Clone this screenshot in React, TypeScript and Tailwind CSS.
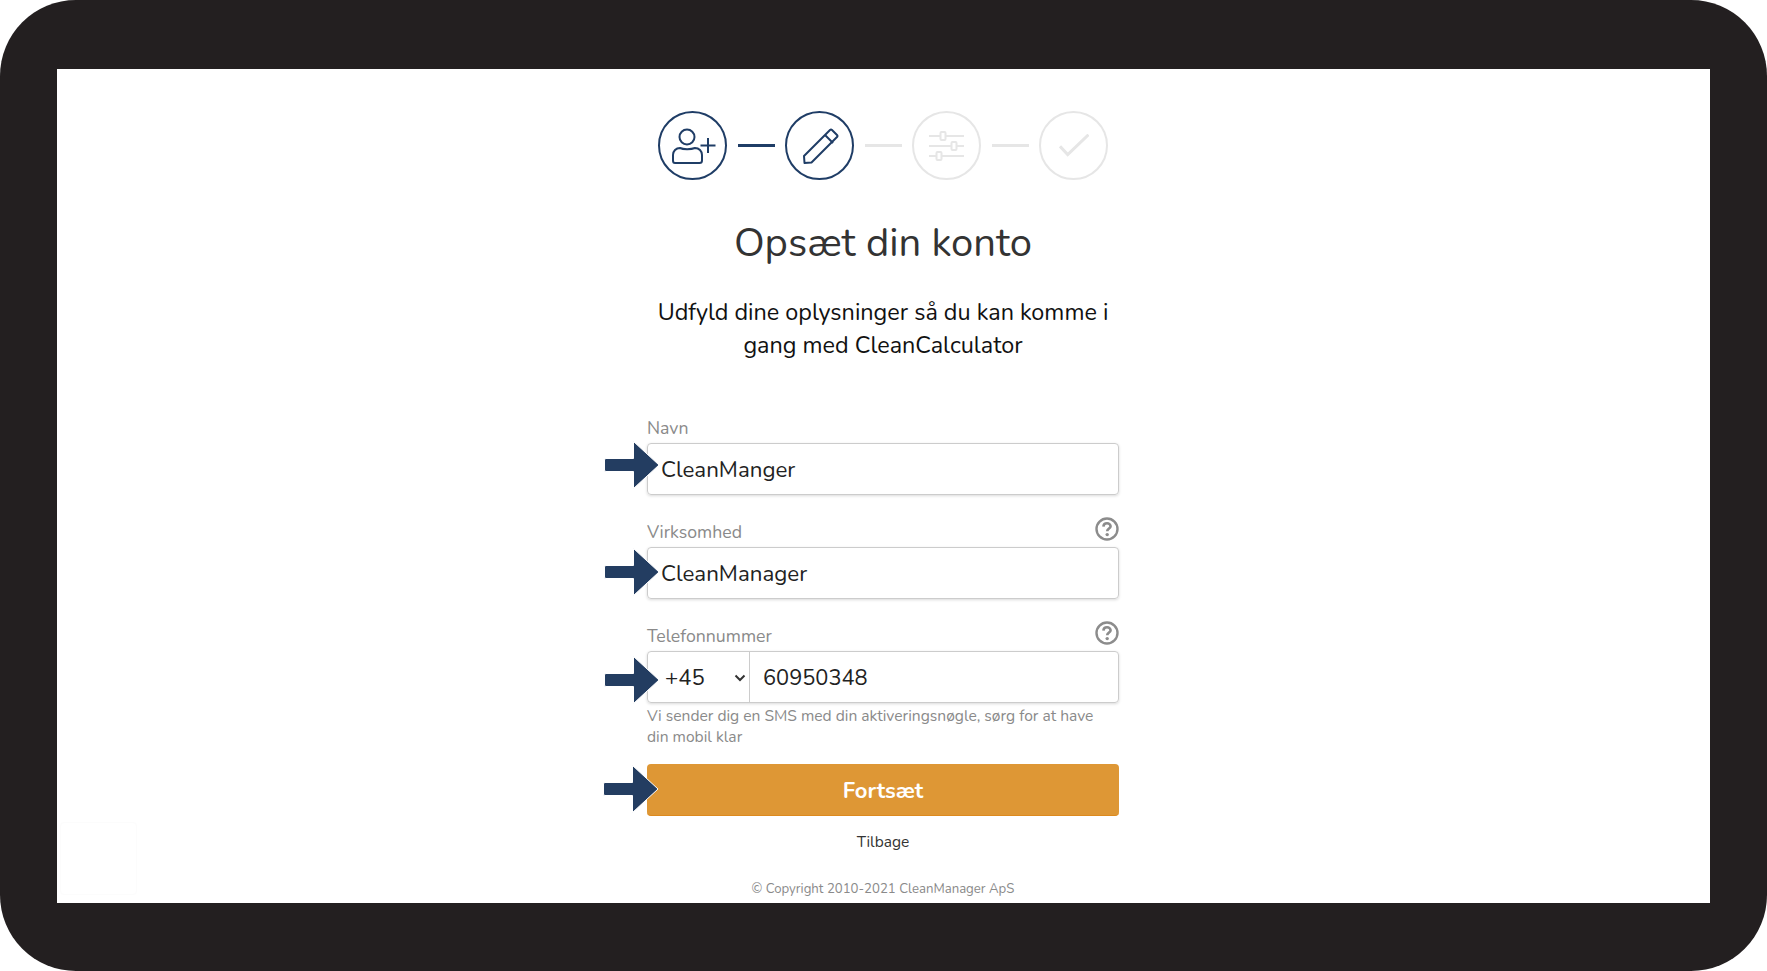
const navy = "#1f3d66";
const grey = "#e6e6e6";

function Arrow({ className }: { className: string }) {
  return (
    <svg className={`absolute left-[-45px] ${className}`} width="58" height="52" viewBox="0 0 58 52">
      <path
        d="M3 19.500 H30.500 V2.500 L56 26 L30.500 49.500 V32.500 H3 Q1.500 32.500 1.500 31 V21 Q1.500 19.500 3 19.500 Z"
        fill="#233d61"
        stroke="#ffffff"
        strokeWidth="1"
        strokeLinejoin="round"
      />
    </svg>
  );
}

function Circle({ color, children }: { color: string; children: React.ReactNode }) {
  return (
    <div
      className="w-[69px] h-[69px] rounded-full border-2 flex items-center justify-center shrink-0"
      style={{ borderColor: color }}
    >
      {children}
    </div>
  );
}

function Line({ color }: { color: string }) {
  return <div className="w-[37px] h-[3px] ml-[11px] mr-[10px] shrink-0" style={{ backgroundColor: color }} />;
}

function Help() {
  return (
    <svg className="absolute right-0 top-[-4px]" width="24" height="24" viewBox="0 0 24 24" fill="none">
      <circle cx="12" cy="12" r="10.500" stroke="#8c8c8c" strokeWidth="2.400" />
      <path d="M8.400 9.600 C8.600 7.400 10.200 6.300 12 6.300 C14 6.300 15.600 7.600 15.600 9.300 C15.600 11.400 12.200 11.600 12.200 14.200" stroke="#8c8c8c" strokeWidth="2.600" />
      <circle cx="12.200" cy="17.600" r="1.700" fill="#8c8c8c" />
    </svg>
  );
}

const labelCls = "h-[26px] text-[17.700px] leading-[22px] text-[#8a8a8a]";
const boxCls = "relative h-[52px] rounded-[4px] border border-[#cccccc] shadow-[0_1px_3px_rgba(0,0,0,0.15)] flex items-center text-[22.300px] text-[#222222]";

export default function App() {
  return (
    <div className="w-[1767px] h-[971px] bg-white overflow-hidden font-['Nunito','Lato','Noto_Sans',sans-serif]">
      <div className="relative w-full h-full bg-[#231f20] rounded-[76px] pt-[69px] pb-[68px] px-[57px]">
        <div className="absolute left-[60px] top-[822px] w-[77px] h-[73px] border border-[#fcfcfc] rounded-sm" />
        <div className="w-full h-full bg-white flex flex-col items-center pt-[42px]">
          <div className="flex items-center mr-[1px]">
            <Circle color={navy}>
              <svg width="44" height="36" viewBox="0 0 44 36" fill="none" stroke={navy} strokeWidth="2" className="ml-[3px]">
                <circle cx="15" cy="9" r="7.500" />
                <path d="M3 35 H27.500 Q30 35 30 32.500 V27 C30 23 27 20 23 20 C19 21.500 11 21.500 8 20 C4 20 1 23 1 27 V32.500 Q1 35 3 35 Z" />
                <path d="M36 10 V25 M28.500 17.500 H43.500" />
              </svg>
            </Circle>
            <Line color={navy} />
            <Circle color={navy}>
              <svg width="36" height="36" viewBox="0 0 36 36" fill="none" stroke={navy} strokeWidth="2" strokeLinejoin="round" className="ml-[3px]">
                <path d="M1 28 L27 2 Q28 1 29 2 L34 7 Q35 8 34 9 L8.500 34.500 L1.500 35 Z" />
                <path d="M22 7 L30 15" />
              </svg>
            </Circle>
            <Line color={grey} />
            <Circle color={grey}>
              <svg width="36" height="30" viewBox="0 0 36 30" fill="none" stroke={grey} strokeWidth="2" className="ml-[1px]">
                <path d="M0 5 H35 M0 15 H35 M0 25 H35" />
                <rect x="11.500" y="1" width="5" height="8" rx="1" fill="#fff" />
                <rect x="22.500" y="11" width="5" height="8" rx="1" fill="#fff" />
                <rect x="7.500" y="21" width="5" height="8" rx="1" fill="#fff" />
              </svg>
            </Circle>
            <Line color={grey} />
            <Circle color={grey}>
              <svg width="30" height="23" viewBox="0 0 30 23" fill="none" stroke={grey} strokeWidth="3" className="ml-[1px]">
                <path d="M1 12.300 L8.700 20.500 L29.500 0.700" />
              </svg>
            </Circle>
          </div>

          <h1 className="mt-[35px] text-[40px] leading-[56px] text-[#333333] mr-[1px]">Opsæt din konto</h1>

          <p className="mt-[25px] w-[472px] text-center text-[23.400px] leading-[33px] text-[#111111] mr-[1px]">
            Udfyld dine oplysninger så du kan komme i gang med CleanCalculator
          </p>

          <div className="mt-[55px] w-[472px] flex flex-col mr-[1px]">
            <div className="relative">
              <div className={labelCls}>Navn</div>
              <div className={`${boxCls} pl-[13px] pt-[2px]`}>
                CleanManger
                <Arrow className="top-[-5px]" />
              </div>
            </div>

            <div className="relative mt-[26px]">
              <Help />
              <div className={labelCls}>Virksomhed</div>
              <div className={`${boxCls} pl-[13px] pt-[2px]`}>
                CleanManager
                <Arrow className="top-[-2px]" />
              </div>
            </div>

            <div className="relative mt-[26px]">
              <Help />
              <div className={labelCls}>Telefonnummer</div>
              <div className={boxCls}>
                <div className="w-[102px] h-full border-r border-[#cccccc] flex items-center justify-between pl-[17px] pr-[3px] pt-[2px] shrink-0">
                  <span className="text-[22px]">+45</span>
                  <svg width="12" height="8" viewBox="0 0 12 8" fill="none" stroke="#333333" strokeWidth="2">
                    <path d="M1.500 1.500 L6 6 L10.500 1.500" />
                  </svg>
                </div>
                <span className="pl-[13px] pt-[2px] text-[21.800px]">60950348</span>
                <Arrow className="top-[2px]" />
              </div>
            </div>

            <p className="mt-[3px] pr-[24px] text-[15.600px] leading-[21px] text-[#8a8a8a]">
              Vi sender dig en SMS med din aktiveringsnøgle, sørg for at have din mobil klar
            </p>

            <div className="relative mt-[16px] h-[52px] rounded-[4px] bg-[#de9735] border-b border-[#dd8a1e] flex items-center justify-center pt-[3px] text-white font-bold text-[22px]">
              Fortsæt
              <Arrow className="top-[-1px]" />
            </div>

            <div className="mt-[14px] text-center text-[15.500px] leading-[24px] text-[#333333]">Tilbage</div>
            <div className="mt-[25px] text-center text-[13.200px] leading-[20px] text-[#8a8a8a]">© Copyright 2010-2021 CleanManager ApS</div>
          </div>
        </div>
      </div>
    </div>
  );
}
